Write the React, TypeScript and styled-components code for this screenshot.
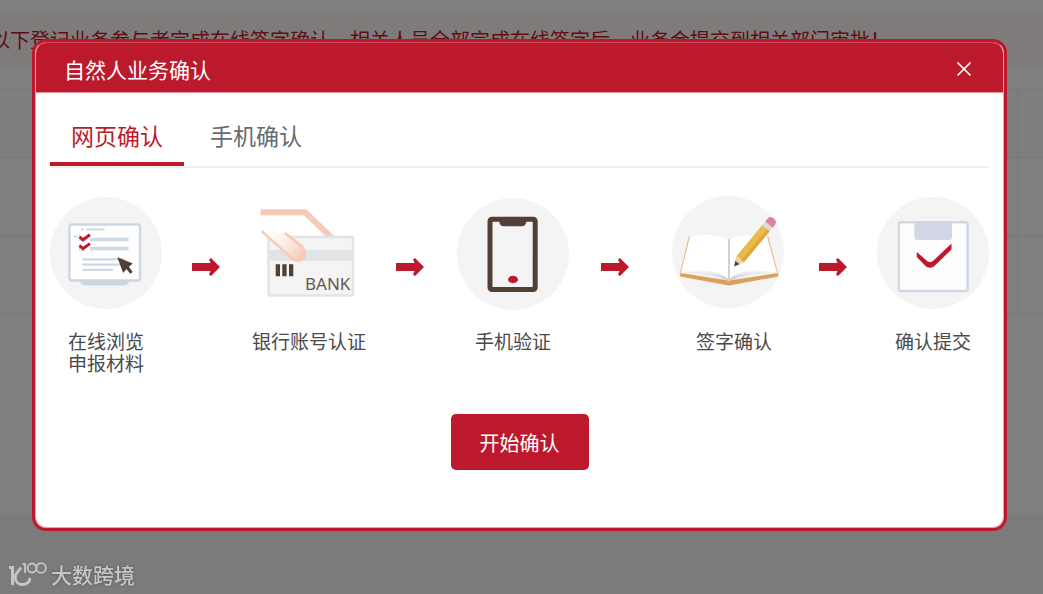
import React from "react";
import styled, { createGlobalStyle } from "styled-components";

const RED = "#bc1a2c";

const GlobalStyle = createGlobalStyle`
  * { box-sizing: border-box; }
  body {
    margin: 0;
    background: #f6f6f6;
    font-family: "Noto Sans CJK SC", "Liberation Sans", sans-serif;
    overflow: hidden;
  }
  button { font-family: inherit; border: 0; cursor: pointer; }
`;

const Page = styled.div`
  min-height: 100vh;
`;

const PageContent = styled.main`
  background: #ffffff;
  padding: 12px 0 200px;
  overflow: hidden;
`;

const Notice = styled.p`
  margin: 0 0 21px;
  padding: 0;
  text-indent: -10px;
  font-size: 20px;
  line-height: 56px;
  white-space: nowrap;
  color: ${RED};
  background: #fff6f4;
`;

const Grid = styled.table`
  width: 100%;
  border-collapse: collapse;
  border-top: 1px solid #eceef2;

  td, th {
    height: 78px;
    padding: 0;
    border-bottom: 1px solid #eceef2;
    border-right: 1px solid #eceef2;
  }
  th { height: 68px; background: #fcfcfd; }
  td:last-child, th:last-child { width: 26px; border-right: 0; }
`;

const Overlay = styled.div`
  position: fixed;
  inset: 0;
  padding: 39px 36px 0 32px;
  background: rgba(0, 0, 0, 0.5);
`;

const Dialog = styled.section`
  border: 3px solid ${RED};
  border-radius: 14px;
  background: ${RED};
`;

const DialogInner = styled.div`
  border: 1px solid #ec9fa9;
  border-top-color: #d0465a;
  border-radius: 11px;
  background: #ffffff;
  overflow: hidden;
`;

const Header = styled.header`
  display: flex;
  align-items: center;
  justify-content: space-between;
  height: 50px;
  padding: 2px 31px 0 28px;
  color: #ffffff;
  background: ${RED};
  border-bottom: 1px solid #e8909b;
`;

const Title = styled.h1`
  margin: 0;
  font-size: 21px;
  line-height: 30px;
  font-weight: 400;
`;

const CloseButton = styled.button`
  display: flex;
  padding: 0;
  color: #ffffff;
  background: none;
`;

const Body = styled.div`
  display: flex;
  flex-direction: column;
  padding: 17px 14px 57px;
`;

const Tabs = styled.div`
  display: flex;
  gap: 5px;
  border-bottom: 2px solid #ebefee;
`;

const Tab = styled.button<{ $active?: boolean }>`
  height: 56px;
  padding: 0 21px 2px;
  font-size: 23px;
  line-height: 50px;
  color: ${(p) => (p.$active ? RED : "#666b70")};
  background: none;
  border-bottom: 4px solid ${(p) => (p.$active ? RED : "transparent")};
`;

const Steps = styled.div`
  display: flex;
  margin: 28px 0 40px;
`;

const Step = styled.figure<{ $lead: number; $width: number }>`
  flex: none;
  width: ${(p) => p.$width + p.$lead}px;
  margin: 0;
  padding-left: ${(p) => p.$lead}px;

  svg { display: block; }
`;

const StepLabel = styled.figcaption`
  display: flex;
  flex-direction: column;
  align-items: center;
  margin-top: 20px;
  font-size: 19px;
  line-height: 22px;
  white-space: nowrap;
  color: #4a4a4a;
`;

const ArrowCell = styled.div<{ $share: number }>`
  flex: ${(p) => p.$share} 1 0;
  display: flex;
  justify-content: center;
  padding-top: 62px;
`;

const StartButton = styled.button`
  align-self: center;
  height: 56px;
  padding: 0 29px;
  font-size: 20px;
  color: #ffffff;
  background: ${RED};
  border-radius: 5px;
`;

const Watermark = styled.div`
  position: fixed;
  left: 8px;
  bottom: 5px;
  display: flex;
  align-items: center;
  gap: 4px;
  font-size: 21px;
  line-height: 30px;
  font-weight: 500;
  color: #c6c6c6;
  text-shadow: 0 0 3px #555555;
`;

const Arrow = ({ share }: { share: number }) => (
  <ArrowCell $share={share}>
    <svg width="28" height="18" viewBox="0 0 28 18" aria-hidden="true">
      <path d="M0 5h18.500l-1.500-3.500L19 0l9 9-9 9-2-1.500 1.500-3.500H0z" fill={RED} />
    </svg>
  </ArrowCell>
);

const BrowseArt = () => (
  <svg width="112" height="114" viewBox="0 0 112 114" fill="none">
    <circle cx="56" cy="57" r="56" fill="#f4f4f4" />
    <path d="M30 85h49.500c-1 3-3 4.500-5 4.500H35c-2.500 0-4.500-2-5-4.500z" fill="#cbd6e2" />
    <rect x="19.500" y="28.500" width="70.500" height="56" rx="2.500" fill="#fff" stroke="#cbd6e2" strokeWidth="2.300" />
    <g stroke="#cfd9e5">
      <path d="M31 33.500h2.500M36 33.500h18.500M23.500 40.500h4.500" strokeWidth="2" />
      <path d="M40 43.500h38.500M40 52.500h38.500" strokeWidth="3.500" />
      <path d="M32.500 63.300h42M32.500 68.700h40M32.500 73.900h30.500" strokeWidth="2.200" />
      <path d="M29.500 38v6.500h5.500M29.500 47.500v7h5.500" strokeWidth="1" />
    </g>
    <path d="M29.500 40.800l3.500 3 7-5M29.500 49.600l3.500 3 7-5" stroke={RED} strokeWidth="3" />
    <path d="M67.300 61.300l15.600 6.200-4 3.300 3.800 5.200-2.500 1.700-3.700-4.800-3.300 4z" fill="#523f36" />
  </svg>
);

const BankArt = () => (
  <svg width="118" height="114" viewBox="0 0 118 114" fill="none">
    <defs>
      <linearGradient id="finger" x1="22" y1="36" x2="52" y2="64" gradientUnits="userSpaceOnUse">
        <stop offset="0" stopColor="#fff" />
        <stop offset="0.600" stopColor="#fce2d8" />
        <stop offset="1" stopColor="#f7c5b1" />
      </linearGradient>
    </defs>
    <path d="M10.500 16.300H55L82 42" stroke="#f8cbb9" strokeWidth="6" />
    <rect x="18.500" y="41" width="84.500" height="58.500" rx="1" fill="#f4f4f4" stroke="#e1e4e7" strokeWidth="2.500" />
    <path d="M19 54h84v10.700H19z" fill="#e1e4e6" />
    <path d="M12 35.500l29.500 26.500c5 5 13.500 3 13.500-4 0-4-1.500-6-3.500-8L35.500 37z" fill="url(#finger)" />
    <path d="M11.500 35l30 27c5 5 13.500 3 13.500-4 0-4-1.500-6-3.500-8L35 37" stroke="#f8cbb9" strokeWidth="2.500" />
    <path d="M25.700 68.300h4.300v12h-4.300zM32.300 68.300h4.300v12h-4.300zM39 68.300h4.300v12H39z" fill="#523f36" />
    <text x="55" y="94" fontFamily="Noto Sans, sans-serif" fontSize="17" fill="#66574f">BANK</text>
  </svg>
);

const PhoneArt = () => (
  <svg width="112" height="114" viewBox="0 0 112 114" fill="none">
    <circle cx="56" cy="58" r="56" fill="#f4f4f4" />
    <rect x="33" y="23.300" width="45.200" height="70.200" rx="2" stroke="#523f36" strokeWidth="5" />
    <path d="M42 25h27.500c-.5 3.500-2 5.300-4.500 5.300H47c-3 0-4.500-2-5-5.300z" fill="#523f36" />
    <ellipse cx="56" cy="83.500" rx="5" ry="3.700" fill={RED} />
  </svg>
);

const SignArt = () => (
  <svg width="124" height="114" viewBox="0 0 124 114" fill="none">
    <defs>
      <linearGradient id="pageShade" x1="0" y1="66" x2="0" y2="84" gradientUnits="userSpaceOnUse">
        <stop offset="0.400" stopColor="#fff" />
        <stop offset="1" stopColor="#c4c7ca" />
      </linearGradient>
    </defs>
    <circle cx="56" cy="56" r="56" fill="#f4f4f4" />
    <path d="M8 77l49 7.500L106.300 77v3.500L57 89.500 8 80.500z" fill="#dda05c" />
    <path d="M17.500 40.500L8.500 78M95.500 40.500l10 37.500" stroke="#ebbf8a" strokeWidth="1.500" />
    <path d="M18 41c13-3 29-3 39 3 10-6 26-6 38-3l10 36c-18 0-36 2-48 8-12-6-30-8-48-8z" fill="#fff" />
    <path d="M9 77c18-4 38-4 48 7 10-11 30-11 48-7-18 0-36 2-48 8-12-6-30-8-48-8z" fill="url(#pageShade)" />
    <path d="M57 43v42" stroke="#cfd1d4" strokeWidth="2" />
    <g transform="translate(62.500 70) rotate(-50.300)">
      <path d="M0 0l9-5v10z" fill="#f2d3a8" />
      <path d="M-.5 0l5-2.800v5.600z" fill="#49464a" />
      <path d="M9-4.800h41v9.600H9z" fill="#e9bb4b" />
      <path d="M9 1.500h41v3.300H9z" fill="#dca83a" />
      <path d="M49-4.800h6v9.600h-6z" fill="#d9dadd" />
      <path d="M54-4.800h4c5 0 5 9.600 0 9.600h-4z" fill="#dc8499" />
    </g>
  </svg>
);

const SubmitArt = () => (
  <svg width="112" height="114" viewBox="0 0 112 114" fill="none">
    <circle cx="56" cy="57" r="56" fill="#f4f4f4" />
    <rect x="21.800" y="26.200" width="68.800" height="68.800" rx="2" fill="#fdfdfd" stroke="#cfd9e4" strokeWidth="2.400" />
    <path d="M37.300 26H75v15c0 2-1 3-3 3H40.300c-2 0-3-1-3-3z" fill="#cfd8e4" />
    <path d="M39.800 56l9.700 8.500c2.500 2 4.500 2 7 0L74.500 47.500v6L58 69.500c-3 3-7 3-10 0L39.800 61z" fill={RED} />
  </svg>
);

const WatermarkLogo = () => (
  <svg width="39" height="26" viewBox="0 0 39 26" fill="none" stroke="#c6c6c6" aria-hidden="true">
    <path d="M1 6.500h3.500V24" strokeWidth="3" />
    <path d="M13 6.500L7.500 14c-1 6 2 9.500 6.500 9.500 4 0 7.500-2 8-6.500" strokeWidth="2.800" />
    <path d="M14.500 3H17v9" strokeWidth="1.800" />
    <circle cx="24" cy="7" r="4.500" strokeWidth="1.800" />
    <circle cx="33" cy="7" r="4.800" strokeWidth="1.800" />
  </svg>
);

const steps = [
  { art: <BrowseArt />, label: ["在线浏览", "申报材料"], width: 112, lead: 0, gap: 0 },
  { art: <BankArt />, label: ["银行账号认证"], width: 118, lead: 0, gap: 88 },
  { art: <PhoneArt />, label: ["手机验证"], width: 112, lead: 6, gap: 83 },
  { art: <SignArt />, label: ["签字确认"], width: 124, lead: 12, gap: 91 },
  { art: <SubmitArt />, label: ["确认提交"], width: 112, lead: 8, gap: 73 },
];

export default function App() {
  return (
    <Page>
      <GlobalStyle />
      <PageContent>
        <Notice>
          以下登记业务参与者完成在线签字确认，相关人员全部完成在线签字后，业务会提交到相关部门审批！
        </Notice>
        <Grid>
          <thead>
            <tr><th /><th /></tr>
          </thead>
          <tbody>
            <tr><td /><td /></tr>
            <tr><td /><td /></tr>
          </tbody>
        </Grid>
      </PageContent>
      <Overlay>
        <Dialog role="dialog" aria-modal="true" aria-labelledby="dialog-title">
          <DialogInner>
            <Header>
              <Title id="dialog-title">自然人业务确认</Title>
              <CloseButton type="button" aria-label="关闭">
                <svg width="16" height="16" viewBox="0 0 16 16" fill="none" stroke="currentColor" strokeWidth="1.700">
                  <path d="M1.500 1.500l13 13M14.500 1.500l-13 13" />
                </svg>
              </CloseButton>
            </Header>
            <Body>
              <Tabs role="tablist">
                <Tab type="button" role="tab" aria-selected="true" $active>网页确认</Tab>
                <Tab type="button" role="tab" aria-selected="false">手机确认</Tab>
              </Tabs>
              <Steps>
                {steps.map((step, i) => (
                  <React.Fragment key={step.label[0]}>
                    {i > 0 && <Arrow share={step.gap} />}
                    <Step $width={step.width} $lead={step.lead}>
                      {step.art}
                      <StepLabel>
                        {step.label.map((line) => <span key={line}>{line}</span>)}
                      </StepLabel>
                    </Step>
                  </React.Fragment>
                ))}
              </Steps>
              <StartButton type="button">开始确认</StartButton>
            </Body>
          </DialogInner>
        </Dialog>
      </Overlay>
      <Watermark>
        <WatermarkLogo />
        <span>大数跨境</span>
      </Watermark>
    </Page>
  );
}
